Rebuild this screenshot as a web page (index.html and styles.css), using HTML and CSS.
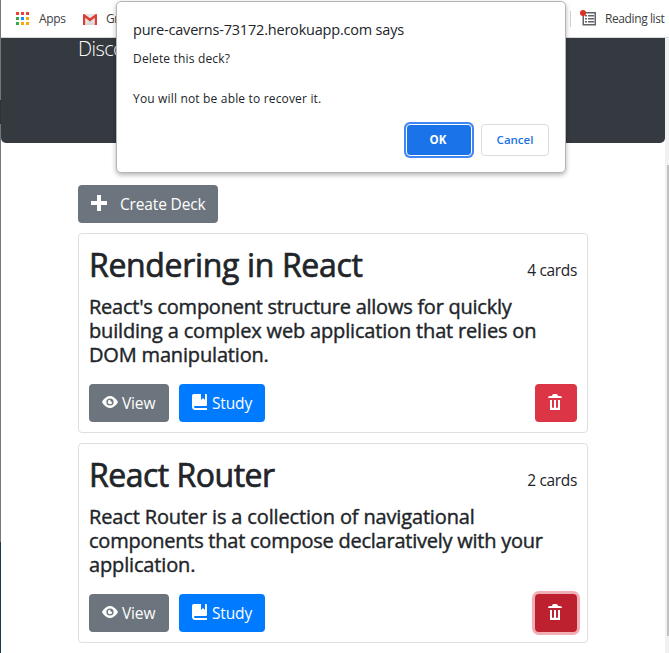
FILE: index.html
```html
<!DOCTYPE html>
<html lang="en">
<head>
<meta charset="utf-8">
<title>Flashcards</title>
<link rel="stylesheet" href="styles.css">
</head>
<body>
<svg width="0" height="0" class="defs">
  <symbol id="eye" viewBox="0 0 8 8"><path d="M4.03 1C1.5 1 0 4 0 4s1.5 3 4.03 3C6.5 7 8 4 8 4S6.5 1 4.03 1zM4 2.200a1.800 1.800 0 1 1 0 3.600a1.800 1.800 0 1 1 0-3.600zm0 .7a1.100 1.100 0 1 0 1.100 1.100c0-.1-.01-.19-.03-.28a.5.5 0 0 1-.75-.75A1 1 0 0 0 4 2.900z"/></symbol>
  <symbol id="book" viewBox="0 0 8 8"><path d="M1 0C.93 0 .87.01.81.03.42.11.11.42.03.81A.7.7 0 0 0 0 1v5.5C0 7.33.67 8 1.5 8H7.5V7H1.5a.5.5 0 0 1 0-1H7a.5.5 0 0 0 .5-.5v-5A.5.5 0 0 0 7 0H6.5v3l-1-1-1 1V0z"/></symbol>
  <symbol id="trash" viewBox="0 0 8 8"><path d="M3 0a1 1 0 0 0-1 1H1a1 1 0 0 0-1 1h7a1 1 0 0 0-1-1H5a1 1 0 0 0-1-1H3zM1 3v5h5V3H5v3.5a.5.5 0 0 1-1 0V3H3v3.500a.5.5 0 0 1-1 0V3H1z"/></symbol>
</svg>
<div class="window">
  <div class="edge"></div>
  <div class="browser">
    <div class="bookmarks">
      <svg class="apps" width="13" height="13" viewBox="0 0 13 13" shape-rendering="crispEdges">
        <path fill="#ea4335" d="M0 0h3v3H0zM5 0h3v3H5zM10 0h3v3h-3z"/>
        <path fill="#34a853" d="M0 5h3v3H0zM0 10h3v3H0z"/><path fill="#1a8cff" d="M5 5h3v3H5z"/>
        <path fill="#fbaa05" d="M10 5h3v3h-3zM5 10h3v3H5zM10 10h3v3h-3z"/>
      </svg>
      <span class="apps-label">Apps</span>
      <svg class="gmail" width="14" height="11" viewBox="0 0 14 11">
        <path fill="#e6e6e6" d="M1 0h12v11H1z"/><path fill="#c9c9c9" d="M7 6l6 5H3z" opacity=".5"/>
        <path fill="#d93f35" d="M0 1a1 1 0 0 1 1.500-.8L7 4.300 12.500.2A1 1 0 0 1 14 1v10h-2.200V3.700L7 7.400 2.200 3.700V11H0z"/>
      </svg>
      <span class="gmail-label">Gr</span>
      <span class="divider"></span>
      <svg class="list" width="17" height="17" viewBox="0 0 17 17">
        <path fill="none" stroke="#5f6368" stroke-width="1.500" d="M3.250 2.750h12v12h-12z"/>
        <path fill="#5f6368" d="M5 5h2v1.500H5zM8 5h6v1.500H8zM5 8h2v1.500H5zM8 8h6v1.500H8zM5 11h2v1.500H5zM8 11h6v1.500H8z"/>
        <circle cx="3" cy="3" r="3" fill="#d93025"/>
      </svg>
      <span class="list-label">Reading list</span>
    </div>
    <div class="view">
      <div class="page">
        <header class="hero"><p class="lead">Disco</p></header>
        <main class="content">
          <button class="btn create"><svg width="16" height="16" viewBox="0 0 16 16"><path fill="#fff" d="M6 0h4v6h6v4h-6v6H6v-6H0V6h6z"/></svg><span class="create-label">Create Deck</span></button>
          <section class="deck">
            <div class="head"><h2 class="t1">Rendering in React</h2><span class="count">4 cards</span></div>
            <p class="desc"><span class="a1">React's component structure allows for quickly</span><br><span class="a2">building a complex web application that relies on</span><br><span class="a3">DOM manipulation.</span></p>
            <div class="actions">
              <button class="btn view-btn"><svg width="16" height="16"><use href="#eye"/></svg><span>View</span></button>
              <button class="btn study"><svg width="16" height="16"><use href="#book"/></svg><span>Study</span></button>
              <button class="btn danger"><svg width="16" height="16"><use href="#trash"/></svg></button>
            </div>
          </section>
          <section class="deck">
            <div class="head"><h2 class="t2">React Router</h2><span class="count">2 cards</span></div>
            <p class="desc"><span class="b1">React Router is a collection of navigational</span><br><span class="b2">components that compose declaratively with your</span><br><span class="b3">application.</span></p>
            <div class="actions">
              <button class="btn view-btn"><svg width="16" height="16"><use href="#eye"/></svg><span>View</span></button>
              <button class="btn study"><svg width="16" height="16"><use href="#book"/></svg><span>Study</span></button>
              <button class="btn danger focused"><svg width="16" height="16"><use href="#trash"/></svg></button>
            </div>
          </section>
        </main>
      </div>
      <div class="scrollbar"><div class="thumb"></div></div>
    </div>
  </div>
</div>
<div class="dialog">
  <div class="origin">pure-caverns-73172.herokuapp.com says</div>
  <div class="message"><span class="m1">Delete this deck?</span><br><br><span class="m2">You will not be able to recover it.</span></div>
  <div class="dialog-actions"><button class="ok">OK</button><button class="cancel">Cancel</button></div>
</div>
</body>
</html>
```
FILE: styles.css
```css
* { box-sizing: border-box; }
body { margin: 0; width: 669px; height: 653px; overflow: hidden; background: #fff; color: #212529; font-family: "Open Sans", "Noto Sans", sans-serif; font-size: 16px; line-height: 24px; }
.defs { position: absolute; }
button { font-family: inherit; }
span, h2, .origin, .lead { white-space: nowrap; }
.window { display: flex; height: 653px; }
.edge { width: 1px; background: linear-gradient(#777 0 100px, #333 100px 124px, #777 124px 542px, #173a50 542px); }
.browser { flex: 1; min-width: 0; display: flex; flex-direction: column; }
.bookmarks { height: 38px; border-bottom: 1px solid #d5d7da; display: flex; align-items: center; font-size: 12px; color: #3c4043; padding-left: 15px; }
.bookmarks svg, .bookmarks span { flex: none; }
.apps-label { margin-left: 10px; width: 27px; letter-spacing: -.3px; }
.gmail { margin: 2px 9px 0 17px; }
.gmail-label { width: 14px; letter-spacing: -.5px; }
.divider { width: 1px; height: 16px; background: #cfd1d4; margin-left: 450px; }
.list { margin-left: 9px; }
.list-label { margin-left: 8px; letter-spacing: -.4px; }
.view { flex: 1; display: flex; min-height: 0; }
.page { flex: 1; min-width: 0; }
.hero { height: 105px; background: #343a40; border-radius: 0 0 5px 5px; padding-left: 77px; color: #fff; }
.lead { margin: 0; font-size: 20px; font-weight: 300; line-height: 22px; letter-spacing: -.6px; }
.content { width: 510px; margin: 42px auto 0 77px; }
.btn { height: 38px; border: 0; border-radius: 4px; padding: 0 13px; color: #fff; font-size: 15.500px; line-height: 24px; display: flex; align-items: center; letter-spacing: -.15px; }
.btn svg { fill: #fff; flex: none; }
.btn span { margin-left: 4px; }
.create { background: #6c757d; width: 140px; }
.create svg { margin-top: -2px; }
.create .create-label { margin-left: 13px; }
.deck { height: 200px; border: 1px solid #dfdfdf; border-radius: 4px; margin-top: 10px; padding: 10px; }
.head { display: flex; justify-content: space-between; align-items: center; height: 46px; }
h2 { margin: 0 0 4px; font-size: 32px; font-weight: 400; line-height: 38px; -webkit-text-stroke: .7px; }
.t1 { letter-spacing: -.34px; }
.t2 { letter-spacing: -.5px; }
.count { margin-top: 5px; font-size: 15.500px; letter-spacing: -.35px; }
.desc { margin: 5px 0 17px; font-size: 20px; line-height: 24px; -webkit-text-stroke: .4px; }
.a1 { letter-spacing: -.25px; }
.a2, .a3 { letter-spacing: -.17px; }
.b1 { letter-spacing: -.15px; }
.b2 { letter-spacing: -.24px; }
.b3 { letter-spacing: -.15px; }
.actions { display: flex; gap: 10px; }
.view-btn { background: #6c757d; width: 80px; }
.view-btn svg { margin-top: -2px; }
.study { background: #007bff; width: 86px; }
.study svg, .danger svg { margin-top: -3px; }
.danger { background: #dc3545; width: 42px; margin-left: auto; }
.danger.focused { background: #bd2130; box-shadow: 0 0 0 3px #f1aeb5; }
.scrollbar { width: 4px; background: #f1f1f1; padding: 127px 0 0 2px; }
.thumb { height: 471px; background: #c1c1c1; }
.dialog { position: absolute; left: 116px; top: 1px; width: 450px; height: 172px; background: #fff; border: 1px solid #b5b5b5; border-radius: 5px; box-shadow: 0 2px 5px rgba(0,0,0,.3); padding: 18px 16px 16px; }
.origin { font-size: 14.500px; line-height: 20px; letter-spacing: -.2px; }
.message { margin-top: 9px; font-size: 12px; line-height: 20px; letter-spacing: .17px; }
.dialog-actions { display: flex; justify-content: flex-end; gap: 9px; margin-top: 15px; }
.dialog-actions button { height: 32px; border-radius: 4px; font-size: 11.500px; font-weight: 600; padding: 0 0 2px; }
.dialog-actions .ok { font-weight: 700; font-size: 11.500px; padding-right: 2px; width: 66px; color: #fff; background: #1a73e8; border: 1px solid #fff; box-shadow: 0 0 0 2px #4285f4; }
.cancel { width: 68px; color: #1a73e8; background: #fff; border: 1px solid #dadce0; }
```
